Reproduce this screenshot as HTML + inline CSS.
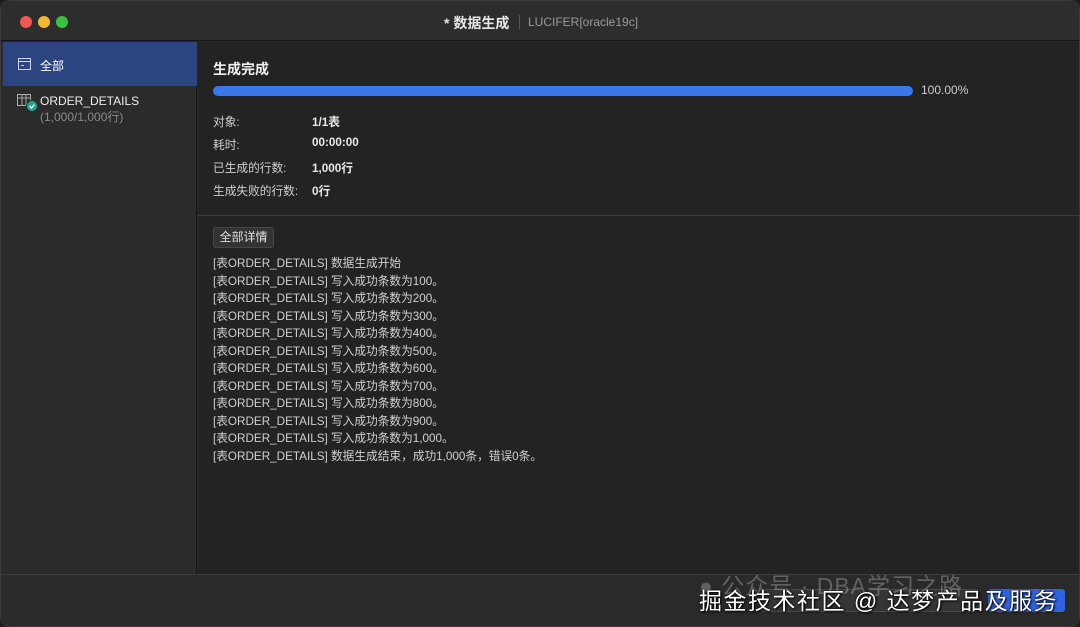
<!DOCTYPE html>
<html><head><meta charset="utf-8"><style>
*{margin:0;padding:0;box-sizing:border-box}
body{width:1080px;height:627px;background:#1e1e1e;font-family:"Liberation Sans","Noto Sans CJK SC",sans-serif;color:#ddd;overflow:hidden;position:relative}
.win{position:absolute;left:0;top:0;width:1080px;height:627px;background:#262626;border-radius:10px;overflow:hidden;border:1px solid #3a3a3a}
.title{position:absolute;left:0;top:0;width:100%;height:40px;background:#2d2d2d;border-bottom:1px solid #161616}
.dot{position:absolute;top:15px;width:12px;height:12px;border-radius:50%}
.ttl{position:absolute;top:12px;left:443px;font-size:14px;font-weight:bold;color:#e6e6e6}
.sub{position:absolute;top:14px;left:518px;font-size:12px;color:#9a9a9a;border-left:1px solid #555;padding-left:8px}
.side{position:absolute;left:0;top:41px;width:196px;height:532px;background:#2b2b2b;border-right:1px solid #161616}
.sel{position:absolute;left:2px;top:0;width:194px;height:44px;background:#2c4480}
.main{position:absolute;left:197px;top:41px;right:0;height:532px;background:#232323}
.bot{position:absolute;left:0;top:573px;width:100%;height:54px;background:#2a2a2a;border-top:1px solid #3c3c3c}
.lbl{position:absolute;left:15px;font-size:11.7px;color:#cfcfcf}
.val{position:absolute;left:114px;font-size:11.7px;color:#e8e8e8;font-weight:bold}
.log{position:absolute;left:15px;top:213px;font-size:11.7px;line-height:17.55px;color:#d0d0d0}
</style></head><body>
<div class="win">
<div class="title">
<div class="dot" style="left:19px;background:#ee5a52"></div>
<div class="dot" style="left:37px;background:#f1b831"></div>
<div class="dot" style="left:55px;background:#38c23f"></div>
<div class="ttl">* 数据生成</div>
<div class="sub">LUCIFER[oracle19c]</div>
</div>
<div class="side">
<div class="sel"></div>
<svg style="position:absolute;left:17px;top:16px" width="13" height="12" viewBox="0 0 13 12"><rect x="0.5" y="0.5" width="12" height="11" fill="none" stroke="#cfd6ea"/><line x1="0.5" y1="3.5" x2="12.5" y2="3.5" stroke="#cfd6ea"/><line x1="3" y1="7.5" x2="6" y2="7.5" stroke="#cfd6ea"/></svg>
<div style="position:absolute;left:39px;top:15px;font-size:12px;color:#fff">全部</div>
<svg style="position:absolute;left:16px;top:52px" width="22" height="20" viewBox="0 0 22 20"><rect x="0.5" y="0.5" width="13" height="11" fill="none" stroke="#aaa"/><line x1="0.5" y1="4" x2="13.5" y2="4" stroke="#aaa"/><line x1="5" y1="0.5" x2="5" y2="11.5" stroke="#aaa"/><line x1="9" y1="0.5" x2="9" y2="11.5" stroke="#aaa"/><circle cx="15" cy="12" r="5.5" fill="#22a58e" stroke="#2b2b2b"/><path d="M12.5 12l2 2 3-3.5" stroke="#fff" stroke-width="1.3" fill="none"/></svg>
<div style="position:absolute;left:39px;top:52px;font-size:12px;color:#eee">ORDER_DETAILS</div>
<div style="position:absolute;left:39px;top:66px;font-size:12px;color:#8a8a8a">(1,000/1,000行)</div>
</div>
<div class="main">
<div style="position:absolute;left:15px;top:17px;font-size:14px;font-weight:bold;color:#f0f0f0">生成完成</div>
<div style="position:absolute;left:15px;top:44px;width:700px;height:10px;border-radius:5px;background:#3b78e7"></div>
<div style="position:absolute;left:723px;top:41px;font-size:12px;color:#ccc">100.00%</div>
<div class="lbl" style="top:71px">对象:</div><div class="val" style="top:71px">1/1表</div>
<div class="lbl" style="top:94px">耗时:</div><div class="val" style="top:94px">00:00:00</div>
<div class="lbl" style="top:117px">已生成的行数:</div><div class="val" style="top:117px">1,000行</div>
<div class="lbl" style="top:140px">生成失败的行数:</div><div class="val" style="top:140px">0行</div>
<div style="position:absolute;left:0;top:173px;width:100%;height:1px;background:#3a3a3a"></div>
<div style="position:absolute;left:15px;top:185px;width:61px;height:21px;background:#333;border:1px solid #474747;border-radius:3px;font-size:12px;color:#e0e0e0;text-align:center;line-height:19px">全部详情</div>
<div class="log">
[表ORDER_DETAILS] 数据生成开始<br>
[表ORDER_DETAILS] 写入成功条数为100。<br>
[表ORDER_DETAILS] 写入成功条数为200。<br>
[表ORDER_DETAILS] 写入成功条数为300。<br>
[表ORDER_DETAILS] 写入成功条数为400。<br>
[表ORDER_DETAILS] 写入成功条数为500。<br>
[表ORDER_DETAILS] 写入成功条数为600。<br>
[表ORDER_DETAILS] 写入成功条数为700。<br>
[表ORDER_DETAILS] 写入成功条数为800。<br>
[表ORDER_DETAILS] 写入成功条数为900。<br>
[表ORDER_DETAILS] 写入成功条数为1,000。<br>
[表ORDER_DETAILS] 数据生成结束，成功1,000条，错误0条。
</div>
</div>
<div class="bot">
<div style="position:absolute;left:760px;top:14px;width:100px;height:23px;border:1px solid #4a4a4a;border-radius:3px;background:#353535"></div>
<div style="position:absolute;left:868px;top:14px;width:110px;height:23px;border:1px solid #4a4a4a;border-radius:3px;background:#353535"></div>
<div style="position:absolute;left:987px;top:14px;width:77px;height:23px;border-radius:3px;background:#2f62e0"></div>
<div style="position:absolute;left:698px;top:-8px;font-size:23px;letter-spacing:1px;color:rgba(200,200,200,0.35)">● 公众号 · DBA学习之路</div>
<div style="position:absolute;left:698px;top:7px;font-size:23px;letter-spacing:1.5px;color:#fff;text-shadow:0 0 2px #000,1px 1px 2px #000">掘金技术社区 @ 达梦产品及服务</div>
</div>
</div>
</body></html>
